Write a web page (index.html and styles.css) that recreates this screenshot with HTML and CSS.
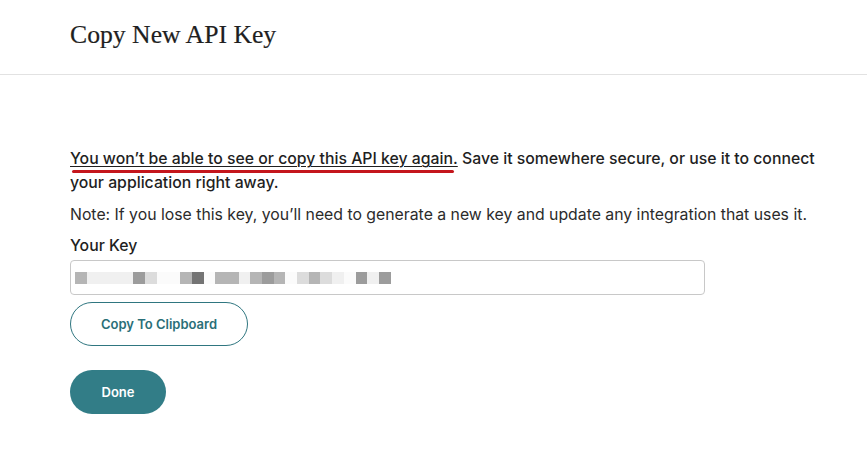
FILE: index.html
```html
<!DOCTYPE html>
<html lang="en">
<head>
<meta charset="utf-8">
<title>Copy New API Key</title>
<link rel="stylesheet" href="styles.css">
</head>
<body>
<header class="header">
  <h1 class="title">Copy New API Key</h1>
</header>
<main class="content">
  <p class="warning"><span class="marked">You won’t be able to see or copy this API key again.</span> Save it somewhere secure, or use it to connect your application right away.</p>
  <p class="note">Note: If you lose this key, you’ll need to generate a new key and update any integration that uses it.</p>
  <label class="label">Your Key</label>
  <div class="key-field">
    <div class="pixels">
      <i class="c3"></i><i class="c1"></i><i class="c1"></i><i class="c1"></i><i class="c1"></i><i class="c4"></i><i class="c2"></i><i class="c0"></i><i class="c0"></i><i class="c3"></i><i class="c5"></i><i class="c0"></i><i class="c3"></i><i class="c3"></i><i class="c1"></i><i class="c3"></i><i class="c4"></i><i class="c3"></i><i class="c0"></i><i class="c2"></i><i class="c3"></i><i class="c2"></i><i class="c1"></i><i class="c0"></i><i class="c4"></i><i class="c1"></i><i class="c4"></i>
    </div>
  </div>
  <button class="btn btn-outline" type="button">Copy To Clipboard</button>
  <button class="btn btn-primary" type="button">Done</button>
</main>
</body>
</html>
```

FILE: styles.css
```css
* { box-sizing: border-box; }
html, body { margin: 0; padding: 0; background: #fff; }
body {
  font-family: Inter, "Noto Sans", sans-serif;
  color: #242424;
}
.header {
  height: 75px;
  border-bottom: 1px solid #e2e2e2;
  padding: 20px 0 0 70px;
}
.title {
  margin: 0;
  font-family: "Liberation Serif", "Times New Roman", serif;
  font-weight: 400;
  font-size: 25.7px;
  line-height: 30px;
  color: #1f1f1f;
  -webkit-text-stroke: 0.2px #1f1f1f;
}
.content {
  padding: 72px 0 0 70px;
  display: flex;
  flex-direction: column;
  align-items: flex-start;
}
.warning {
  margin: 0;
  font-size: 15.8px;
  line-height: 24px;
  font-weight: 500;
  max-width: 760px;
  color: #1f1f1f;
}
.marked {
  position: relative;
  text-decoration: underline;
  text-decoration-thickness: 1px;
  text-underline-offset: 2px;
}
.marked::after {
  content: "";
  position: absolute;
  left: 2px;
  right: 4px;
  bottom: -5px;
  height: 3px;
  border-radius: 2px;
  background: #c4161c;
}
.note {
  margin: 8px 0 0;
  font-size: 15.8px;
  line-height: 24px;
  color: #2b2b2b;
}
.label {
  margin-top: 7px;
  font-size: 15.8px;
  line-height: 24px;
  font-weight: 500;
  color: #1f1f1f;
}
.key-field {
  margin-top: 2px;
  width: 635px;
  height: 35px;
  border: 1px solid #c8c8c8;
  border-radius: 4px;
  padding: 11px 0 0 4px;
}
.pixels { display: flex; }
.pixels i {
  display: block;
  width: 11.7px;
  height: 12px;
}
.c0 { background: #fbfbfb; }
.c1 { background: #f0f0f0; }
.c2 { background: #dcdcdc; }
.c3 { background: #b5b5b5; }
.c4 { background: #9c9c9c; }
.c5 { background: #747474; }
.btn {
  font-family: Inter, "Noto Sans", sans-serif;
  font-size: 13px;
  font-weight: 600;
  height: 44px;
  border-radius: 22px;
  cursor: pointer;
}
.btn-outline {
  margin-top: 7px;
  width: 178px;
  background: #fff;
  border: 1px solid #2f7680;
  color: #2a6f78;
}
.btn-primary {
  margin-top: 24px;
  width: 96px;
  background: #327d87;
  border: none;
  color: #fff;
}
```
